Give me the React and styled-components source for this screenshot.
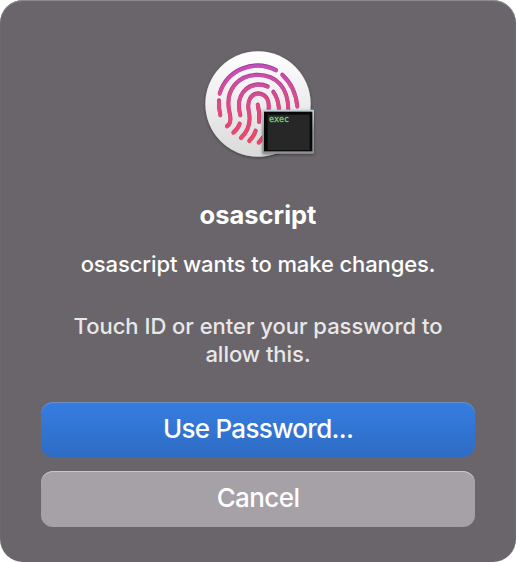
import React from "react";
import styled, { createGlobalStyle } from "styled-components";

const GlobalStyle = createGlobalStyle`
  *, *::before, *::after { box-sizing: border-box; }
  html, body { margin: 0; background: #fff; }
`;

const Dialog = styled.main`
  display: flex;
  flex-direction: column;
  align-items: center;
  width: 516px;
  height: 562px;
  padding: 44px 41px 35px;
  border-radius: 23px;
  background: #69656a;
  box-shadow: inset 0 1px 1px #929095;
  font-family: Inter, "Liberation Sans", sans-serif;
  color: #fff;
  text-align: center;
  overflow: hidden;
`;

const Icon = styled.svg`
  display: block;
  width: 124px;
  height: 120px;
  flex: none;
`;

const Title = styled.h1`
  margin: 35px 0 0;
  font-size: 25.5px;
  font-weight: 700;
  line-height: 32px;
  letter-spacing: 0;
`;

const Message = styled.p`
  margin: 19px 0 0;
  font-size: 22px;
  font-weight: 500;
  line-height: 28px;
  letter-spacing: -0.11px;
  white-space: nowrap;
`;

const Hint = styled.p`
  width: 400px;
  margin: 34px 0 0;
  color: #e9e8e9;
  font-size: 22px;
  font-weight: 450;
  line-height: 28px;
  letter-spacing: -0.02px;
`;

const Actions = styled.div`
  display: flex;
  flex-direction: column;
  gap: 14px;
  width: 100%;
  margin-top: auto;
`;

const Button = styled.button`
  height: ${(p) => (p.$primary ? 55 : 56)}px;
  padding: 0 0 ${(p) => (p.$primary ? 1 : 2)}px;
  border: 0;
  border-radius: 12px;
  background: ${(p) =>
    p.$primary ? "linear-gradient(#367de1, #2e6cc4)" : "#a5a1a6"};
  box-shadow: inset 0 1px 0 ${(p) => (p.$primary ? "#6b8fc2" : "#c9c6ca")};
  color: #fff;
  font: 500 26px/32px Inter, "Liberation Sans", sans-serif;
  letter-spacing: ${(p) => (p.$primary ? -0.72 : -0.6)}px;
`;

const ridges = [
  "M71 148A119 119 0 0 1 240 78",
  "M259 92Q298 127 304 187",
  "M69 169Q68 194 73 213",
  "M93 246C106 239 105 224 101 207C84 137 128 92 185 92C243 92 276 132 277 196",
  "M215 127C168 106 114 142 133 213",
  "M232 143Q247 163 249 197",
  "M112 265Q125 256 131 239",
  "M135 281C158 260 165 230 158 199C147 137 213 132 218 180V200",
  "M185 182Q192 206 189 233",
  "M160 290Q173 278 179 260",
  "M188 295L203 278",
];

function TouchIdIcon() {
  return (
    <Icon viewBox="0 0 372 360" role="img" aria-label="Touch ID">
      <defs>
        <linearGradient id="disc" x1="0" y1="0" x2="0" y2="1">
          <stop offset="0" stopColor="#fff" />
          <stop offset="1" stopColor="#dadada" />
        </linearGradient>
        <linearGradient id="ridge" gradientUnits="userSpaceOnUse" x1="0" y1="60" x2="0" y2="300">
          <stop offset="0" stopColor="#c050bd" />
          <stop offset="0.45" stopColor="#dc4a88" />
          <stop offset="1" stopColor="#f24766" />
        </linearGradient>
        <linearGradient id="ridgeShade" gradientUnits="userSpaceOnUse" x1="0" y1="60" x2="0" y2="300">
          <stop offset="0" stopColor="#9a3a99" />
          <stop offset="1" stopColor="#d43a59" />
        </linearGradient>
        <linearGradient id="frame" x1="0" y1="0" x2="0" y2="1">
          <stop offset="0" stopColor="#c3d3d9" />
          <stop offset="0.5" stopColor="#8d9799" />
          <stop offset="1" stopColor="#909193" />
        </linearGradient>
        <filter id="shadow" x="-15%" y="-15%" width="130%" height="130%">
          <feDropShadow dx="0" dy="3" stdDeviation="4" floodColor="#000" floodOpacity="0.4" />
        </filter>
      </defs>
      <circle cx="186" cy="180" r="158" fill="url(#disc)" filter="url(#shadow)" />
      <g fill="none" strokeLinecap="round" strokeLinejoin="round">
        <g stroke="url(#ridgeShade)" strokeWidth="12">
          {ridges.map((d) => <path key={d} d={d} />)}
        </g>
        <g stroke="url(#ridge)" strokeWidth="10.5" transform="translate(0 2)">
          {ridges.map((d) => <path key={d} d={d} />)}
        </g>
      </g>
      <g filter="url(#shadow)">
        <rect x="199" y="197" width="155" height="132" rx="4" fill="url(#frame)" />
      </g>
      <rect x="204" y="203" width="145" height="119" fill="#080808" />
      <rect x="215" y="212" width="126" height="106" fill="#272727" />
      <text x="219" y="234" fill="#78d978" fontFamily="DejaVu Sans Mono, monospace" fontSize="25" stroke="#78d978" strokeWidth="0.8">exec</text>
    </Icon>
  );
}

export default function App() {
  return (
    <>
      <GlobalStyle />
      <Dialog>
        <TouchIdIcon />
        <Title>osascript</Title>
        <Message>osascript wants to make changes.</Message>
        <Hint>Touch ID or enter your password to allow this.</Hint>
        <Actions>
          <Button $primary>Use Password...</Button>
          <Button>Cancel</Button>
        </Actions>
      </Dialog>
    </>
  );
}
